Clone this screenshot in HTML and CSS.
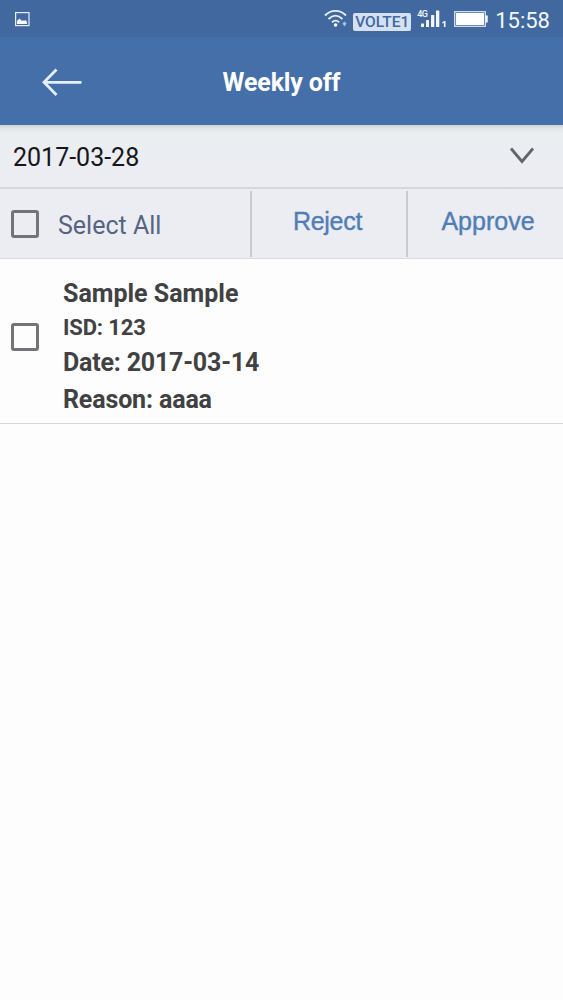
FILE: index.html
```html
<!DOCTYPE html>
<html lang="en">
<head>
    <meta charset="UTF-8" />
    <meta name="viewport" content="width=device-width, initial-scale=1" />
    <title>Weekly off</title>
    <link rel="stylesheet" href="styles.css">
</head>
<body>
    <div class="statusbar">
        <svg class="picture" width="15" height="15" viewBox="0 0 15 15">
            <rect x="0.6" y="0.6" width="13.4" height="13" fill="none" stroke="#e6eef8" stroke-width="1.2" />
            <path d="M2 12V9l2.500-2.500 2.500 2.500 1-.8 1 .8 1.500-1 1.500 2v2z" fill="#fff" />
        </svg>
        <div class="status-icons">
            <svg class="wifi" width="24" height="19" viewBox="0 0 24 19" fill="none" stroke="#e8f0fa" stroke-width="1.800">
                <path d="M1 6.500C7 .3 16 .3 22 6.500" />
                <path d="M4.500 10C9 5.600 14 5.600 18.500 10" />
                <path d="M8 13.300c2.500-2.200 4.800-2.200 7.200 0" />
                <circle cx="11.600" cy="16" r="1.800" fill="#fff" stroke="none" />
                <path d="M18.500 14.500l2-2 2 2-2 3z" fill="#9cc8f0" stroke="none" />
            </svg>
            <span class="volte"><span>VOLTE</span><span class="sim">1</span></span>
            <span class="signal">
                <span class="net">4G</span>
                <svg width="30" height="19" viewBox="0 0 30 19" fill="#f2f7fd">
                    <rect x="4" y="14.500" width="3" height="3.500" rx="0.5" />
                    <rect x="9" y="11" width="3" height="7" rx="0.5" />
                    <rect x="14" y="6" width="3.300" height="12" rx="0.5" />
                    <rect x="19" y="1.500" width="3.300" height="16.500" rx="0.5" />
                    <path d="M25.300 13.300l2-1.300h1.200v6h-1.600v-4.200l-1.600.8z" />
                </svg>
            </span>
            <svg class="battery" width="34" height="16" viewBox="0 0 34 16">
                <rect x="0.700" y="0.700" width="30.600" height="14.600" fill="none" stroke="#dfe8f4" stroke-width="1.200" />
                <rect x="2" y="2" width="28" height="12" fill="#fff" />
                <rect x="31.500" y="4.500" width="2.200" height="7" fill="#fff" />
            </svg>
            <span class="clock">15:58</span>
        </div>
    </div>

    <header class="header">
        <a class="back" href="#" aria-label="Back">
            <svg width="42" height="30" viewBox="0 0 42 30" fill="none" stroke="#e6eefa" stroke-width="2.800">
                <path d="M41.500 15.300H4M16.500 2.500L4 15.300 16.500 28" />
            </svg>
        </a>
        <h1>Weekly off</h1>
    </header>

    <div class="date-select">
        <span>2017-03-28</span>
        <svg width="26" height="18" viewBox="0 0 26 18" fill="none" stroke="#62666c" stroke-width="2.800">
            <path d="M2 1.500L13 14.500 24 1.500" />
        </svg>
    </div>

    <div class="actions">
        <label class="select-all">
            <input type="checkbox" class="check">
            <span>Select All</span>
        </label>
        <button class="action reject">Reject</button>
        <button class="action approve">Approve</button>
    </div>

    <div class="item">
        <input type="checkbox" class="check">
        <div class="info">
            <p class="name">Sample Sample</p>
            <p class="isd">ISD: 123</p>
            <p class="date">Date: 2017-03-14</p>
            <p class="reason">Reason: aaaa</p>
        </div>
    </div>
</body>
</html>
```
FILE: styles.css
```css
* {
    box-sizing: border-box;
}
body {
    margin: 0;
    min-height: 100vh;
    background: #fdfdfd;
    font-family: Roboto, "Liberation Sans", sans-serif;
    font-size: 25px;
    color: #414143;
}
p, h1 {
    margin: 0;
}
.statusbar {
    display: flex;
    justify-content: space-between;
    height: 37px;
    padding: 0 13px 0 15px;
    background: #41699f;
}
.picture {
    margin-top: 12px;
}
.status-icons {
    display: flex;
    align-items: flex-start;
    color: #f4f8fd;
}
.wifi {
    margin-top: 9px;
}
.volte {
    display: flex;
    justify-content: space-between;
    width: 58px;
    height: 18px;
    margin: 13px 0 0 5px;
    padding: 0 2px;
    border-radius: 2px;
    background: #d5e1f1;
    color: #41699f;
    font-size: 15.5px;
    font-weight: 500;
    line-height: 19px;
}
.signal {
    position: relative;
    display: flex;
    margin: 9px 0 0 6px;
}
.net {
    position: absolute;
    top: 0;
    left: 0;
    font-size: 9px;
    font-weight: 500;
    line-height: 10px;
    letter-spacing: -0.5px;
}
.battery {
    margin: 11px 0 0 7px;
}
.clock {
    margin-left: 7px;
    font-size: 22px;
    line-height: 41px;
}
.header {
    position: relative;
    display: flex;
    align-items: center;
    justify-content: center;
    height: 88px;
    background: #456fa9;
    color: #fff;
}
.header h1 {
    margin-top: 4px;
    font-size: 25px;
    line-height: 30px;
    font-weight: 700;
    letter-spacing: -0.15px;
}
.back {
    position: absolute;
    left: 40px;
    top: 30px;
    display: flex;
}
.date-select {
    display: flex;
    align-items: center;
    justify-content: space-between;
    height: 64px;
    padding: 0 28px 0 13px;
    border-bottom: 2px solid #d5d7db;
    background: linear-gradient(#cfd2d5, #e4e7ea 4px, #ebeef1 9px, #ebedf3);
    color: #151619;
}
.date-select span {
    line-height: 30px;
    margin-top: 4px;
}
.actions {
    display: flex;
    align-items: center;
    height: 70px;
    border-bottom: 1px solid #d8dade;
    background: #ebedf3;
}
.select-all {
    display: flex;
    align-items: center;
    width: 250px;
    padding-left: 11px;
    color: #566481;
}
.select-all span {
    margin: 3px 0 0 19px;
}
.check {
    appearance: none;
    flex: none;
    width: 28px;
    height: 28px;
    margin: 0;
    border: 3px solid #737477;
    border-radius: 3px;
}
.action {
    height: 66px;
    border: 0;
    border-left: 2px solid #c8cacf;
    padding: 0 0 4px;
    background: none;
    color: #517db6;
    font-family: "Liberation Sans", Arial, sans-serif;
    font-size: 25px;
    -webkit-text-stroke: 0.4px #517db6;
}
.reject {
    width: 156px;
    padding-right: 3px;
    letter-spacing: -0.3px;
}
.approve {
    flex: 1;
    padding-left: 5px;
}
.item {
    display: flex;
    align-items: center;
    height: 165px;
    padding: 0 11px;
    border-bottom: 1px solid #d6d7da;
}
.item .check {
    margin-bottom: 9px;
}
.info {
    margin: 12px 0 0 24px;
    font-weight: 700;
}
.name {
    line-height: 34px;
}
.isd {
    font-size: 22px;
    line-height: 34px;
    letter-spacing: -0.15px;
}
.date {
    line-height: 36px;
    letter-spacing: -0.2px;
}
.reason {
    line-height: 37px;
    letter-spacing: -0.15px;
}
```
